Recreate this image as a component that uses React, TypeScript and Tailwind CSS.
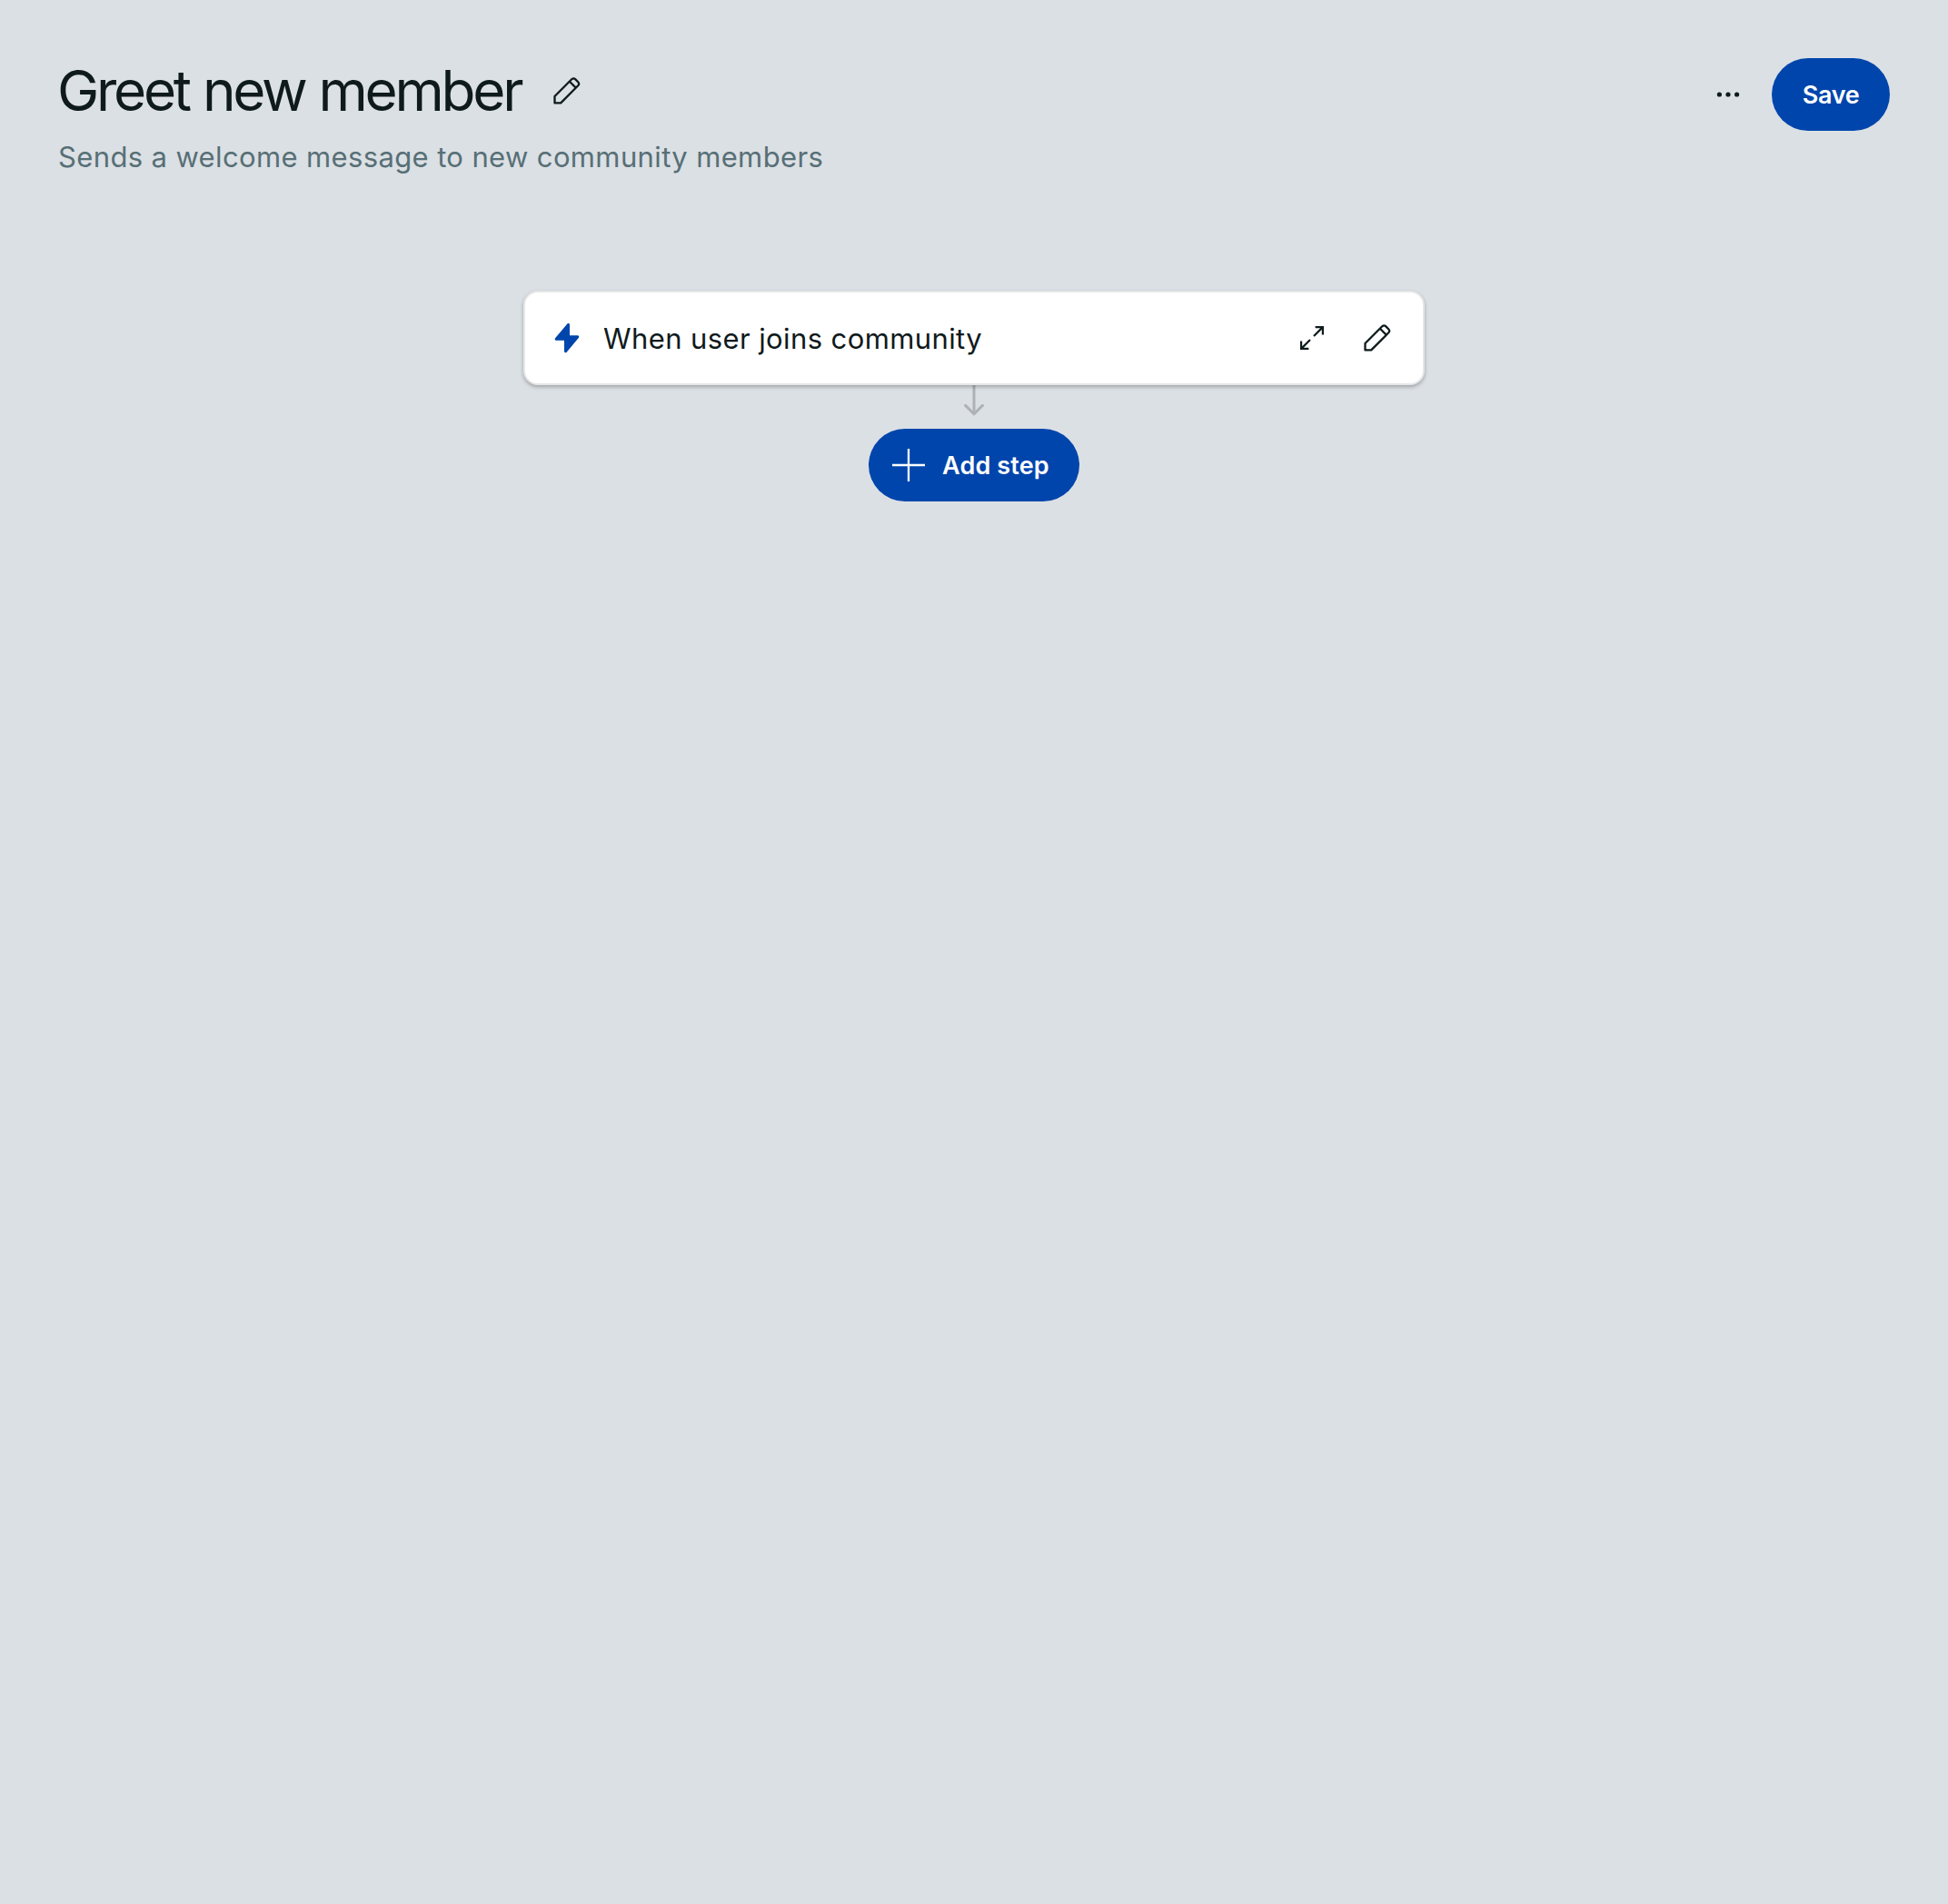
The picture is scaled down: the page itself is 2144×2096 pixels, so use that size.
import React from 'react';

function PencilIcon() {
  return (
    <svg viewBox="0 0 32 32" className="size-8 shrink-0" fill="none" stroke="currentColor" strokeWidth="2.3" strokeLinejoin="round">
      <path d="M2.5 22V29.4H9.2L28.2 10.3C29.4 9 29.4 7.4 28.2 6.2L25.4 3.4C24.2 2.2 22.4 2.2 21.2 3.3Z" />
      <path d="M18.9 5.7L25.8 12.6" />
    </svg>
  );
}

function ExpandIcon() {
  return (
    <svg viewBox="0 0 32 32" className="size-8 shrink-0" fill="none" stroke="currentColor" strokeWidth="2.2">
      <path d="M19.6 4.1H27.9V12.4M27.6 4.4L18 14" />
      <path d="M4.1 19.6V27.9H12.4M4.4 27.6L14 18" />
    </svg>
  );
}

function BoltIcon() {
  return (
    <svg viewBox="0 0 32 32" className="size-8 shrink-0 overflow-visible" fill="currentColor" stroke="currentColor" strokeWidth="3" strokeLinejoin="round">
      <path d="M17.5 1.4V14.8H27.8L14.5 30.7V17.2H4.2Z" />
    </svg>
  );
}

function MoreIcon() {
  return (
    <svg viewBox="0 0 32 32" className="size-8" fill="currentColor">
      <circle cx="6.4" cy="16" r="2.6" />
      <circle cx="16" cy="16" r="2.6" />
      <circle cx="25.6" cy="16" r="2.6" />
    </svg>
  );
}

function PlusIcon() {
  return (
    <svg viewBox="0 0 40 40" className="size-10" fill="none" stroke="currentColor" strokeWidth="2.3">
      <path d="M20 2V38M2 20H38" />
    </svg>
  );
}

function FlowArrow() {
  return (
    <svg viewBox="0 0 24 48" className="h-12 w-6" fill="none" stroke="#000" strokeWidth="3" opacity="0.2">
      <path d="M12 0V31" />
      <path d="M2.6 22.4L12 31.8L21.4 22.4" strokeLinecap="round" strokeLinejoin="round" />
    </svg>
  );
}

export default function App() {
  return (
    <div className="flex min-h-screen flex-col bg-[#dbe0e4] font-['Inter',sans-serif] text-[#0f1a1c]">
      <header className="flex items-start justify-between px-16 pt-16">
        <div>
          <div className="flex h-[72px] items-center gap-[34px]">
            <h1 className="-ml-px w-[511px] whitespace-nowrap text-[62px] leading-[72px] tracking-[-3.25px] [word-spacing:0.8px]">Greet new member</h1>
            <button aria-label="Edit name"><PencilIcon /></button>
          </div>
          <p className="mt-[17px] whitespace-nowrap text-[31px] leading-10 tracking-[0.37px] text-[#576f76]">
            Sends a welcome message to new community members
          </p>
        </div>
        <div className="flex items-center gap-8">
          <button aria-label="More options"><MoreIcon /></button>
          <button className="h-20 w-[130px] whitespace-nowrap rounded-full bg-[#0045ac] pt-0.5 text-[27px] font-semibold tracking-[-0.3px] text-white">Save</button>
        </div>
      </header>

      <main className="mt-[127px] flex flex-col items-center">
        <section className="flex h-[104px] w-[992px] items-center rounded-2xl border-2 border-[#e5e7e8] bg-white px-[30px] shadow-[0_2px_4px_rgba(0,0,0,0.28)]">
          <span className="text-[#0045ac]"><BoltIcon /></span>
          <span className="ml-6 flex-1 whitespace-nowrap pt-0.5 text-[31px] leading-10 tracking-[0.4px]">When user joins community</span>
          <div className="flex gap-10 pr-1">
            <button aria-label="Expand"><ExpandIcon /></button>
            <button aria-label="Edit trigger"><PencilIcon /></button>
          </div>
        </section>
        <FlowArrow />
        <button className="flex h-20 w-[232px] items-center gap-[17px] whitespace-nowrap rounded-full bg-[#0045ac] pl-6 text-[27px] font-semibold tracking-[0.15px] text-white">
          <PlusIcon />
          <span className="pt-0.5">Add step</span>
        </button>
      </main>
    </div>
  );
}
